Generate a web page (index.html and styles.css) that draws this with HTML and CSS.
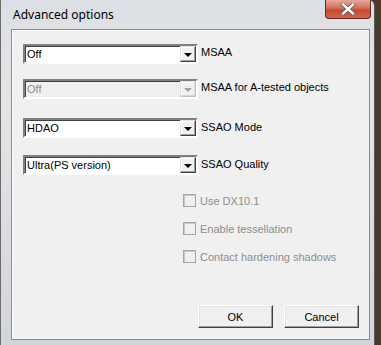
FILE: index.html
```html
<!DOCTYPE html>
<html lang="en">
<head>
    <meta charset="UTF-8">
    <title>Advanced options</title>
    <link rel="stylesheet" href="styles.css">
</head>
<body>
    <div class="window">
        <div class="titlebar">
            <span class="title">Advanced options</span>
            <div class="close">
                <svg width="16" height="12" viewBox="0 0 16 12">
                    <path d="M3 1.5 L13 10.5 M13 1.5 L3 10.5" stroke="#5a5a5a" stroke-width="4" stroke-linecap="square"/>
                    <path d="M3 1.5 L13 10.5 M13 1.5 L3 10.5" stroke="#ffffff" stroke-width="2.4" stroke-linecap="square"/>
                </svg>
            </div>
        </div>
        <div class="client">
            <div class="row row-1">
                <div class="combo">
                    <span class="value">Off</span>
                    <span class="arrow"><i></i></span>
                </div>
                <span class="label">MSAA</span>
            </div>
            <div class="row row-2">
                <div class="combo disabled">
                    <span class="value">Off</span>
                    <span class="arrow"><i></i></span>
                </div>
                <span class="label">MSAA for A-tested objects</span>
            </div>
            <div class="row row-3">
                <div class="combo">
                    <span class="value">HDAO</span>
                    <span class="arrow"><i></i></span>
                </div>
                <span class="label">SSAO Mode</span>
            </div>
            <div class="row row-4">
                <div class="combo">
                    <span class="value">Ultra(PS version)</span>
                    <span class="arrow"><i></i></span>
                </div>
                <span class="label">SSAO Quality</span>
            </div>

            <div class="checks">
                <label class="check"><span class="box"></span>Use DX10.1</label>
                <label class="check"><span class="box"></span>Enable tessellation</label>
                <label class="check"><span class="box"></span>Contact hardening shadows</label>
            </div>

            <div class="buttons">
                <button class="btn">OK</button>
                <button class="btn">Cancel</button>
            </div>
        </div>
    </div>
</body>
</html>
```
FILE: styles.css
```css
body {
    margin: 0;
    width: 381px;
    height: 345px;
    overflow: hidden;
    background: linear-gradient(90deg, #3a3128 0%, #1e1a16 50%, #4a3c2a 100%);
    font-family: "Liberation Sans", Arial, sans-serif;
    font-size: 11px;
}
.window {
    width: 375px;
    height: 346px;
    box-sizing: border-box;
    padding: 0 4px 6px 10px;
    background: linear-gradient(180deg, #dcdfe3 0%, #e4e5e7 30%, #d2d5d9 100%);
    border-left: 1px solid #6d6d6d;
    border-right: 1px solid #5a5a5a;
    border-radius: 0 6px 0 0;
    display: flex;
    flex-direction: column;
}
.titlebar {
    height: 29px;
    display: flex;
    align-items: flex-start;
    justify-content: space-between;
    margin-left: -9px;
}
.title {
    font-family: "Noto Sans", "DejaVu Sans", sans-serif;
    font-size: 12px;
    color: #000;
    padding: 6px 0 0 11px;
}
.close {
    width: 44px;
    height: 18px;
    margin-right: -1px;
    border: 1px solid #6a2a20;
    border-top: none;
    border-radius: 0 0 4px 4px;
    background: linear-gradient(180deg, #e8a89a 0%, #d5705a 45%, #c24a2e 55%, #d0644a 100%);
    display: flex;
    align-items: center;
    justify-content: center;
}
.client {
    flex: 1;
    background: #f0f0f0;
    border: 1px solid #8a8a8a;
    box-shadow: inset 1px 1px 0 #ffffff;
    padding: 14px 0 0 11px;
    color: #000;
}
.row {
    display: flex;
    align-items: center;
    gap: 3px;
}
.row-2 { margin-top: 15px; }
.row-3 { margin-top: 19px; }
.row-4 { margin-top: 17px; }
.label {
    padding-bottom: 3px;
}
.row-1 .label, .row-2 .label {
    padding-bottom: 4px;
}
.combo {
    width: 171px;
    height: 16px;
    background: #fff;
    border: 2px solid;
    border-color: #808080 #ffffff #ffffff #808080;
    box-shadow: inset 1px 1px 0 #404040;
    display: flex;
    align-items: center;
    justify-content: space-between;
}
.value {
    padding-left: 2px;
    color: #000;
}
.arrow {
    width: 16px;
    height: 16px;
    box-sizing: border-box;
    background: #f0f0f0;
    border: 1px solid;
    border-color: #e3e3e3 #404040 #404040 #e3e3e3;
    box-shadow: inset -1px -1px 0 #a0a0a0, inset 1px 1px 0 #ffffff;
    display: flex;
    align-items: center;
    justify-content: center;
}
.arrow i {
    width: 0;
    height: 0;
    border-left: 4px solid transparent;
    border-right: 4px solid transparent;
    border-top: 4px solid #000;
    margin-top: 1px;
}
.combo.disabled {
    background: #f0f0f0;
}
.combo.disabled .value {
    color: #8a8a8a;
}
.combo.disabled .arrow {
    border-color: #e3e3e3 #c0c0c0 #c0c0c0 #e3e3e3;
    box-shadow: inset -1px -1px 0 #d8d8d8, inset 1px 1px 0 #ffffff;
}
.combo.disabled .arrow i {
    border-top-color: #a0a0a0;
}
.checks {
    display: flex;
    flex-direction: column;
    gap: 15px;
    margin: 19px 0 0 160px;
}
.check {
    display: flex;
    align-items: center;
    gap: 4px;
    color: #8d8d8d;
    height: 13px;
}
.box {
    width: 13px;
    height: 13px;
    box-sizing: border-box;
    border: 1px solid #a5a5a5;
    box-shadow: inset 1px 1px 0 #c8c8c8;
    background: #f0f0f0;
}
.buttons {
    display: flex;
    justify-content: flex-end;
    gap: 11px;
    margin: 42px 10px 0 0;
}
.btn {
    width: 75px;
    height: 23px;
    font-family: "Liberation Sans", Arial, sans-serif;
    font-size: 11px;
    color: #000;
    background: #f0f0f0;
    border: 1px solid;
    border-color: #ffffff #404040 #404040 #ffffff;
    box-shadow: inset -1px -1px 0 #a0a0a0, inset 1px 1px 0 #e3e3e3;
    padding: 0;
}
```
